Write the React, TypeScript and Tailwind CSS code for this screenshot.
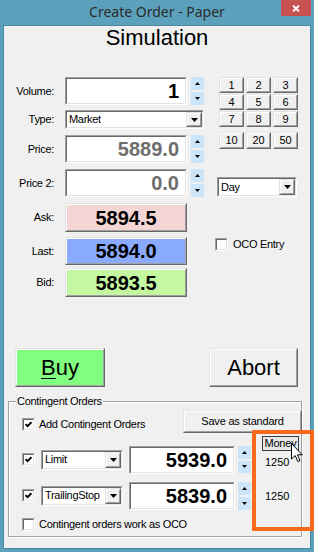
import React from "react";

type P = { className?: string; inner?: string; children?: React.ReactNode };

function Sunken({ className = "", inner = "", children }: P) {
  return (
    <div className={`border border-t-[#a0a0a0] border-l-[#a0a0a0] border-b-white border-r-white ${className}`}>
      <div className={`h-full w-full border border-t-[#696969] border-l-[#696969] border-b-[#e3e3e3] border-r-[#e3e3e3] ${inner}`}>
        {children}
      </div>
    </div>
  );
}

function Raised({ className = "", inner = "", children }: P) {
  return (
    <div className={`border border-t-[#e3e3e3] border-l-[#e3e3e3] border-b-[#696969] border-r-[#696969] ${className}`}>
      <div className={`h-full w-full border border-t-white border-l-white border-b-[#a0a0a0] border-r-[#a0a0a0] ${inner}`}>
        {children}
      </div>
    </div>
  );
}

function Down() {
  return (
    <svg width="7" height="4" viewBox="0 0 7 4">
      <path d="M0 0 L7 0 L3.5 4 Z" fill="#000" />
    </svg>
  );
}

function Spin({ className = "" }: { className?: string }) {
  return (
    <div className={`flex flex-col gap-[2px] ${className}`}>
      <div className="flex-1 bg-[#cce4f7] flex items-center justify-center">
        <svg width="5" height="3" viewBox="0 0 5 3">
          <path d="M2.5 0 L5 3 L0 3 Z" fill="#000" />
        </svg>
      </div>
      <div className="flex-1 bg-[#cce4f7] flex items-center justify-center">
        <svg width="5" height="3" viewBox="0 0 5 3">
          <path d="M0 0 L5 0 L2.5 3 Z" fill="#000" />
        </svg>
      </div>
    </div>
  );
}

function Check({ checked = false }: { checked?: boolean }) {
  return (
    <Sunken className="w-[13px] h-[13px] shrink-0" inner="bg-white flex items-center justify-center">
      {checked && (
        <svg width="7" height="7" viewBox="0 0 7 7">
          <path d="M0.6 3.2 L2.6 5.2 L6.4 1.2" stroke="#000" strokeWidth="1.9" fill="none" />
        </svg>
      )}
    </Sunken>
  );
}

function Select({ value, className = "" }: { value: string; className?: string }) {
  return (
    <Sunken className={className} inner="bg-white flex items-stretch">
      <span className="flex-1 flex items-center pl-[2px] text-[11px] tracking-[-0.3px] leading-none">{value}</span>
      <Raised className="w-[16px] bg-[#f0f0f0]" inner="flex items-center justify-center">
        <Down />
      </Raised>
    </Sunken>
  );
}

function NumInput({ value, gray = false, className = "" }: { value: string; gray?: boolean; className?: string }) {
  return (
    <Sunken className={className} inner="bg-white flex items-center justify-end pr-[6px]">
      <span className={`text-[20px] font-bold leading-none ${gray ? "text-[#6d6d6d]" : "text-black"}`}>{value}</span>
    </Sunken>
  );
}

function Label({ text }: { text: string }) {
  return (
    <div className="w-[50px] mr-[11px] text-right text-[11px] tracking-[-0.3px] leading-none shrink-0">{text}</div>
  );
}

function Quote({ value, bg }: { value: string; bg: string }) {
  return (
    <Raised className={`w-[122px] h-full ${bg}`} inner="flex items-center justify-center">
      <span className="text-[20px] font-bold leading-none">{value}</span>
    </Raised>
  );
}

function Key({ t }: { t: string }) {
  return (
    <Raised className="h-full bg-[#f0f0f0]" inner="flex items-center justify-center">
      <span className="text-[11px] leading-none">{t}</span>
    </Raised>
  );
}

export default function App() {
  return (
    <div className="relative w-[314px] h-[552px] bg-[#5ba1bb] flex flex-col px-[3px] pb-[3px] overflow-hidden font-['Liberation_Sans',Arial,sans-serif] text-black">
      {/* title bar */}
      <div className="h-[25px] flex shrink-0">
        <div className="w-[30px]" />
        <div className="flex-1 flex items-center justify-center pb-[2px] text-[14px] text-[#2b2b2b] font-['Noto_Sans',sans-serif]">
          Create Order - Paper
        </div>
        <div className="w-[30px] h-[16px] bg-[#c75050] flex items-center justify-center">
          <svg width="8" height="7" viewBox="0 0 8 7">
            <path d="M1 0.5 L7 6.5 M7 0.5 L1 6.5" stroke="#fff" strokeWidth="1.8" />
          </svg>
        </div>
      </div>

      {/* client area */}
      <div className="flex-1 border border-[#4b8aa1] bg-[#f0f0f0] flex flex-col">
        <div className="h-[24px] leading-[24px] text-center text-[22px]">Simulation</div>

        <div className="flex mt-[27px]">
          {/* left column */}
          <div className="flex flex-col w-[200px] shrink-0">
            <div className="flex items-center h-[28px]">
              <Label text="Volume:" />
              <NumInput value="1" className="w-[122px] h-full" />
              <Spin className="ml-[4px] w-[13px] h-full" />
            </div>
            <div className="flex items-center h-[19px] mt-[5px]">
              <Label text="Type:" />
              <Select value="Market" className="w-[139px] h-full" />
            </div>
            <div className="flex items-center h-[28px] mt-[6px]">
              <Label text="Price:" />
              <NumInput value="5889.0" gray className="w-[122px] h-full" />
              <Spin className="ml-[4px] w-[13px] h-full" />
            </div>
            <div className="flex items-center h-[28px] mt-[6px]">
              <Label text="Price 2:" />
              <NumInput value="0.0" gray className="w-[122px] h-full" />
              <Spin className="ml-[4px] w-[13px] h-full" />
            </div>
            <div className="flex items-center h-[29px] mt-[6px]">
              <Label text="Ask:" />
              <Quote value="5894.5" bg="bg-[#f3d6d3]" />
            </div>
            <div className="flex items-center h-[28px] mt-[5px]">
              <Label text="Last:" />
              <Quote value="5894.0" bg="bg-[#8aaaff]" />
            </div>
            <div className="flex items-center h-[29px] mt-[3px]">
              <Label text="Bid:" />
              <Quote value="5893.5" bg="bg-[#c3f7a0]" />
            </div>
          </div>

          {/* right column */}
          <div className="flex flex-col ml-[11px]">
            <div className="ml-[4px] grid grid-cols-[25px_25px_25px] auto-rows-[16px] gap-x-[2px] gap-y-[1px]">
              {["1", "2", "3", "4", "5", "6", "7", "8", "9"].map((t) => (
                <Key key={t} t={t} />
              ))}
            </div>
            <div className="ml-[4px] mt-[5px] grid grid-cols-[25px_25px_25px] auto-rows-[17px] gap-x-[2px]">
              {["10", "20", "50"].map((t) => (
                <Key key={t} t={t} />
              ))}
            </div>
            <Select value="Day" className="ml-[2px] mt-[28px] w-[80px] h-[20px]" />
            <div className="flex items-center mt-[41px] h-[13px]">
              <Check />
              <span className="ml-[5px] text-[11px] tracking-[-0.3px] leading-none">OCO Entry</span>
            </div>
          </div>
        </div>

        {/* Buy / Abort */}
        <div className="flex mt-[51px] h-[39px]">
          <Raised className="ml-[11px] w-[90px] h-full bg-[#80ff80]" inner="flex items-center justify-center">
            <span className="text-[22px] leading-none">
              <span className="underline underline-offset-[3px] decoration-1">B</span>uy
            </span>
          </Raised>
          <Raised className="ml-auto mr-[12px] w-[89px] h-full bg-[#f0f0f0]" inner="flex items-center justify-center">
            <span className="text-[22px] leading-none">Abort</span>
          </Raised>
        </div>

        {/* Contingent Orders group */}
        <fieldset className="relative mt-[8px] ml-[4px] w-[294px] h-[142px] border border-[#a0a0a0] shadow-[inset_1px_1px_0_#ffffff,1px_1px_0_#ffffff] flex flex-col">
          <legend className="ml-[7px] px-[1px] text-[11px] tracking-[-0.3px] leading-[13px]">Contingent Orders</legend>

          <div className="flex items-start mt-[2px] h-[23px]">
            <div className="ml-[13px] mt-[8px]">
              <Check checked />
            </div>
            <span className="ml-[4px] mt-[8px] text-[11px] tracking-[-0.3px] leading-[13px]">Add Contingent Orders</span>
            <Raised className="ml-auto mr-[-1px] w-[119px] h-full bg-[#f0f0f0]" inner="flex items-center justify-center">
              <span className="text-[11px] tracking-[-0.2px] leading-none">Save as standard</span>
            </Raised>
          </div>

          <div className="flex">
            <div className="flex flex-col w-[242px] shrink-0">
              <div className="flex items-center mt-[12px] h-[29px]">
                <div className="ml-[13px]">
                  <Check checked />
                </div>
                <Select value="Limit" className="ml-[6px] w-[82px] h-[20px]" />
                <NumInput value="5939.0" className="ml-[6px] w-[106px] h-[28px]" />
                <Spin className="ml-[3px] w-[13px] h-[27px]" />
              </div>
              <div className="flex items-center mt-[7px] h-[29px]">
                <div className="ml-[13px]">
                  <Check checked />
                </div>
                <Select value="TrailingStop" className="ml-[6px] w-[82px] h-[20px]" />
                <NumInput value="5839.0" className="ml-[6px] w-[106px] h-[28px]" />
                <Spin className="ml-[3px] w-[13px] h-[28px]" />
              </div>
            </div>
            <div className="flex flex-col ml-[11px]">
              <div className="mt-[3px] w-[37px] h-[15px] border border-[#3c3c3c] bg-[#e8e8e8] flex items-center justify-center">
                <span className="text-[11px] leading-none tracking-[-0.2px]">Money</span>
              </div>
              <span className="ml-[3px] mt-[5px] text-[11px] leading-[13px]">1250</span>
              <span className="ml-[3px] mt-[21px] text-[11px] leading-[13px]">1250</span>
            </div>
          </div>

          <div className="flex items-center mt-[8px] h-[13px]">
            <div className="ml-[13px]">
              <Check />
            </div>
            <span className="ml-[4px] text-[11px] tracking-[-0.3px] leading-none">Contingent orders work as OCO</span>
          </div>
        </fieldset>
      </div>

      {/* annotation overlay */}
      <div className="absolute left-[252px] top-[430px] w-[62px] h-[101px] border-4 border-[#fb6a1c] pointer-events-none" />
      {/* mouse cursor */}
      <svg className="absolute left-[291px] top-[443px]" width="12" height="20" viewBox="0 0 12 20">
        <path d="M0.5 0.5 L0.5 16 L4.2 12.6 L6.8 18.6 L9 17.6 L6.5 11.8 L11.3 11.8 Z" fill="#fff" stroke="#000" strokeWidth="1" />
      </svg>
    </div>
  );
}
